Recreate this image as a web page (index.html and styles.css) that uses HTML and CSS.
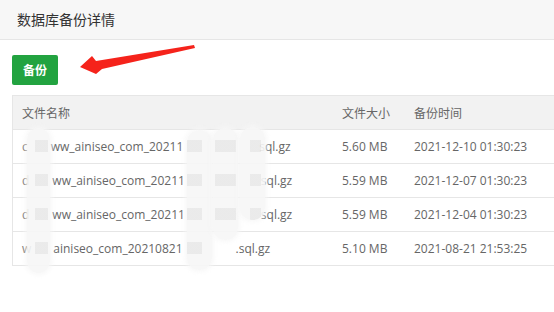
FILE: index.html
```html
<!DOCTYPE html>
<html lang="zh-CN">

<head>
    <meta charset="UTF-8">
    <meta name="viewport" content="width=device-width, initial-scale=1.0">
    <title>数据库备份详情</title>
    <link rel="stylesheet" href="styles.css">
</head>

<body>
    <div class="page">
        <div class="panel-head">数据库备份详情</div>

        <div class="panel-body">
            <div class="toolbar">
                <button class="btn-backup">备份</button>
            </div>

            <div class="table-wrap">
                <table class="backup-table">
                    <thead>
                        <tr>
                            <th class="col-name">文件名称</th>
                            <th class="col-size">文件大小</th>
                            <th class="col-time">备份时间</th>
                        </tr>
                    </thead>
                    <tbody>
                        <tr>
                            <td>c<span class="gap gap-1"></span>ww_ainiseo_com_20211<span class="gap gap-2"></span>sql.gz</td>
                            <td>5.60 MB</td>
                            <td>2021-12-10 01:30:23</td>
                        </tr>
                        <tr>
                            <td>d<span class="gap gap-1"></span>ww_ainiseo_com_20211<span class="gap gap-2"></span>sql.gz</td>
                            <td>5.59 MB</td>
                            <td>2021-12-07 01:30:23</td>
                        </tr>
                        <tr>
                            <td>d<span class="gap gap-1"></span>ww_ainiseo_com_20211<span class="gap gap-2"></span>sql.gz</td>
                            <td>5.59 MB</td>
                            <td>2021-12-04 01:30:23</td>
                        </tr>
                        <tr>
                            <td>w<span class="gap gap-3"></span>ainiseo_com_20210821<span class="gap gap-4"></span>.sql.gz</td>
                            <td>5.10 MB</td>
                            <td>2021-08-21 21:53:25</td>
                        </tr>
                    </tbody>
                </table>

                <!-- mosaic over the file names -->
                <div class="blur blur-a"></div>
                <div class="blur blur-b"></div>
                <div class="blur blur-c"></div>
                <div class="blur blur-d"></div>
            </div>
        </div>

        <svg class="arrow" width="554" height="312" viewBox="0 0 554 312">
            <polygon points="80,67 92,56 96,61 194,45 195,48 102,69 96,74" fill="#f5231b" />
        </svg>
    </div>
</body>

</html>
```

FILE: styles.css
```css
html,
body {
    margin: 0;
    overflow: hidden;
    background: #fff;
}

body {
    font-family: "Open Sans", "Noto Sans CJK SC", sans-serif;
    color: #666;
}

.page {
    position: relative;
    width: 554px;
    height: 312px;
}

.panel-head {
    height: 39px;
    line-height: 39px;
    padding-left: 17px;
    background-color: #f7f7f7;
    border-bottom: 1px solid #e6e6e6;
    font-size: 14px;
    color: #333;
}

.panel-body {
    padding: 15px 0 0 12px;
}

.btn-backup {
    display: block;
    height: 30px;
    padding: 0 11px;
    border: none;
    border-radius: 2px;
    background-color: #22a340;
    color: #fff;
    font-family: inherit;
    font-size: 12px;
    font-weight: bold;
    cursor: pointer;
}

.table-wrap {
    position: relative;
    margin-top: 10px;
}

.backup-table {
    width: 560px;
    border-collapse: collapse;
    font-size: 12px;
}

.backup-table th,
.backup-table td {
    height: 33px;
    padding: 0 9px;
    border-top: 1px solid #e6e6e6;
    border-bottom: 1px solid #e6e6e6;
    text-align: left;
    font-weight: normal;
    white-space: nowrap;
}

.backup-table th:first-child,
.backup-table td:first-child {
    border-left: 1px solid #e6e6e6;
}

.backup-table th {
    background-color: #f2f2f2;
}

.col-name {
    width: 302px;
}

.col-size {
    width: 54px;
}

.gap {
    display: inline-block;
    height: 10px;
}

.gap-1 {
    width: 23px;
}

.gap-2 {
    width: 76px;
}

.gap-3 {
    width: 22px;
}

.gap-4 {
    width: 53px;
}

/* blurred privacy patches */
.blur {
    position: absolute;
    background-color: rgba(246, 246, 246, 0.9);
    border-radius: 12px;
    box-shadow: 0 0 4px 2px rgba(246, 246, 246, 0.8);
    overflow: hidden;
}

.blur::after {
    content: "";
    position: absolute;
    left: 8px;
    right: 2px;
    top: 0;
    bottom: 0;
    background: repeating-linear-gradient(to bottom,
            transparent 0 11px,
            rgba(0, 0, 0, 0.05) 11px 23px,
            transparent 23px 34px);
}

.blur-a {
    left: 15px;
    top: 33px;
    width: 23px;
    height: 145px;
}

.blur-a::after {
    top: 1px;
}

.blur-b {
    left: 175px;
    top: 35px;
    width: 25px;
    height: 140px;
}

.blur-b::after {
    top: -1px;
    left: 0;
    right: 10px;
}

.blur-c {
    left: 201px;
    top: 33px;
    width: 25px;
    height: 112px;
}

.blur-c::after {
    top: 1px;
    left: 2px;
}

.blur-d {
    left: 228px;
    top: 32px;
    width: 25px;
    height: 93px;
}

.blur-d::after {
    top: 2px;
    left: 10px;
    right: 4px;
}

.arrow {
    position: absolute;
    left: 0;
    top: 0;
    pointer-events: none;
}
```
